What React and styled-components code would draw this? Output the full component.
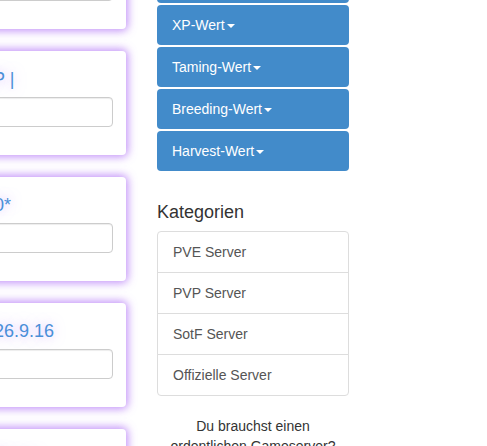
import React from "react";
import styled, { createGlobalStyle } from "styled-components";

const Global = createGlobalStyle`
  html, body { margin: 0; padding: 0; background: #fff; overflow: hidden; }
  body { font-family: "Liberation Sans", Arial, sans-serif; font-size: 14px; line-height: 20px; color: #333; }
  * { box-sizing: border-box; }
`;

const Page = styled.div`
  display: flex;
  align-items: flex-start;
  gap: 31px;
  margin-left: -88px;
  margin-top: -75px;
`;

const FormColumn = styled.div`
  width: 214px;
  display: flex;
  flex-direction: column;
  gap: 22px;
`;

const Card = styled.div`
  background: #fff;
  border-radius: 4px;
  height: 104px;
  padding: 18px 13px 28px 17px;
  box-shadow: 0 0 9px 2px rgba(168, 100, 245, 0.7);
`;

const Label = styled.div`
  font-size: 18px;
  line-height: 20px;
  color: #4a8fd8;
  white-space: nowrap;
  text-shadow: 0 0 12px rgba(180, 120, 255, 0.55);
  margin-bottom: 8px;
`;

const Input = styled.input`
  display: block;
  width: 100%;
  height: 30px;
  border: 1px solid #ccc;
  border-radius: 4px;
  box-shadow: inset 0 1px 1px rgba(0, 0, 0, 0.075);
  background: #fff;
`;

const SideColumn = styled.div`
  width: 192px;
  margin-top: 38px;
  display: flex;
  flex-direction: column;
`;

const ButtonStack = styled.div`
  display: flex;
  flex-direction: column;
  gap: 2px;
`;

const FilterButton = styled.button`
  height: 40px;
  border: none;
  border-radius: 4px;
  background: #428bca;
  color: #fff;
  font-family: "Liberation Sans", Arial, sans-serif;
  font-size: 14px;
  line-height: 20px;
  text-align: left;
  padding: 10px 15px;
  cursor: pointer;
`;

const Caret = styled.span`
  display: inline-block;
  width: 0;
  height: 0;
  margin-left: 2px;
  vertical-align: middle;
  border-top: 4px solid #fff;
  border-left: 4px solid transparent;
  border-right: 4px solid transparent;
`;

const Heading = styled.h4`
  margin: 32px 0 8px;
  font-size: 18px;
  font-weight: 500;
  line-height: 19.8px;
  color: #333;
`;

const ListGroup = styled.div`
  display: flex;
  flex-direction: column;
`;

const ListItem = styled.a`
  display: block;
  padding: 10px 15px;
  border: 1px solid #ddd;
  margin-bottom: -1px;
  color: #555;
  text-decoration: none;
  background: #fff;
  &:first-child { border-radius: 4px 4px 0 0; }
  &:last-child { border-radius: 0 0 4px 4px; margin-bottom: 0; }
`;

const Promo = styled.p`
  margin: 20px 0 0;
  text-align: center;
  color: #333;
  font-size: 14px;
  line-height: 20px;
`;

const fields = ["Servername*", "Server-IP |", "Slots 100*", "Version 26.9.16", "Beschreibung"];
const filters = ["Slots-Wert", "XP-Wert", "Taming-Wert", "Breeding-Wert", "Harvest-Wert"];
const categories = ["PVE Server", "PVP Server", "SotF Server", "Offizielle Server"];

export default function App() {
  return (
    <>
      <Global />
      <Page>
        <FormColumn>
          {fields.map((f) => (
            <Card key={f}>
              <Label>{f}</Label>
              <Input type="text" />
            </Card>
          ))}
        </FormColumn>
        <SideColumn>
          <ButtonStack>
            {filters.map((f) => (
              <FilterButton key={f}>
                {f}
                <Caret />
              </FilterButton>
            ))}
          </ButtonStack>
          <Heading>Kategorien</Heading>
          <ListGroup>
            {categories.map((c) => (
              <ListItem key={c} href="#">{c}</ListItem>
            ))}
          </ListGroup>
          <Promo>
            Du brauchst einen
            <br />
            ordentlichen Gameserver?
          </Promo>
        </SideColumn>
      </Page>
    </>
  );
}
